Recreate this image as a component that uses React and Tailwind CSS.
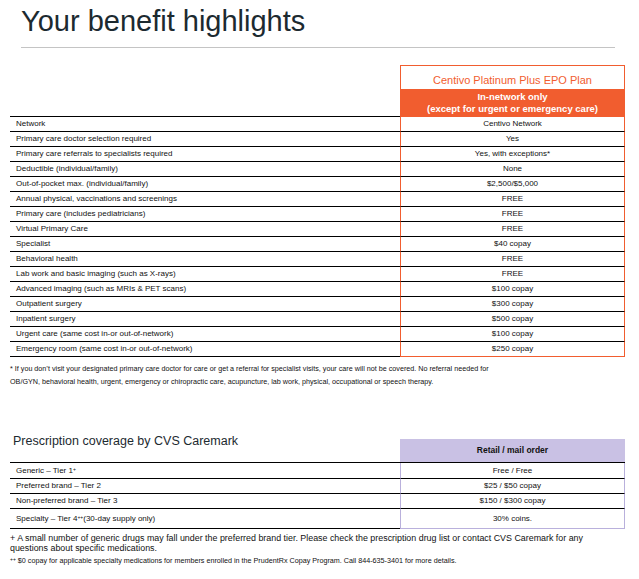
import React from 'react';

const benefits = [
  ['Network', 'Centivo Network'],
  ['Primary care doctor selection required', 'Yes'],
  ['Primary care referrals to specialists required', 'Yes, with exceptions*'],
  ['Deductible (individual/family)', 'None'],
  ['Out-of-pocket max. (individual/family)', '$2,500/$5,000'],
  ['Annual physical, vaccinations and screenings', 'FREE'],
  ['Primary care (includes pediatricians)', 'FREE'],
  ['Virtual Primary Care', 'FREE'],
  ['Specialist', '$40 copay'],
  ['Behavioral health', 'FREE'],
  ['Lab work and basic imaging (such as X-rays)', 'FREE'],
  ['Advanced imaging (such as MRIs & PET scans)', '$100 copay'],
  ['Outpatient surgery', '$300 copay'],
  ['Inpatient surgery', '$500 copay'],
  ['Urgent care (same cost in-or out-of-network)', '$100 copay'],
  ['Emergency room (same cost in-or out-of-network)', '$250 copay'],
];

const rx = [
  { label: 'Generic – Tier 1', sup: '+', rest: '', value: 'Free / Free', h: 'h-[16px]' },
  { label: 'Preferred brand – Tier 2', sup: '', rest: '', value: '$25 / $50 copay', h: 'h-[15px]' },
  { label: 'Non-preferred brand – Tier 3', sup: '', rest: '', value: '$150 / $300 copay', h: 'h-[15px]' },
  { label: 'Specialty – Tier 4', sup: '++', rest: ' (30-day supply only)', value: '30% coins.', h: 'h-[20px]' },
];

export default function App() {
  return (
    <div className="w-[639px] h-[579px] bg-white overflow-hidden text-[#111] font-['Liberation_Sans',Arial,sans-serif]">
      <h1 className="pt-[7px] pl-[21px] text-[29px] leading-none text-[#1c2a30]">Your benefit highlights</h1>
      <div className="mt-[11px] ml-[21px] w-[594px] h-px bg-[#c4c4c4]" />

      <div className="ml-[10px] w-[615px] mt-[17px]">
        <div className="flex">
          <div className="w-[390px] border-b border-black" />
          <div className="w-[225px] border border-b-0 border-[#f15d2f]">
            <div className="h-[23px] flex items-end justify-center pb-[3px] text-[11px] leading-none text-[#f15d2f]">
              Centivo Platinum Plus EPO Plan
            </div>
            <div className="h-[28px] bg-[#f15d2f] flex flex-col items-center justify-center text-white font-bold text-[9.5px] leading-[12px]">
              <span>In-network only</span>
              <span>(except for urgent or emergency care)</span>
            </div>
          </div>
        </div>

        {benefits.map(([label, value], i) => {
          const last = i === benefits.length - 1;
          return (
            <div key={label} className="flex h-[15px] text-[8px] leading-none">
              <div className="w-[390px] pl-[6px] border-b border-black flex items-center">{label}</div>
              <div className={`w-[225px] border-x border-[#f15d2f] border-b flex items-center justify-center ${last ? 'border-b-[#f15d2f]' : 'border-b-black'}`}>
                {value}
              </div>
            </div>
          );
        })}
      </div>

      <p className="ml-[10px] mt-[6px] w-[500px] text-[7.2px] leading-[12.5px]">
        * If you don’t visit your designated primary care doctor for care or get a referral for specialist visits, your care will not be covered. No referral needed for OB/GYN, behavioral health, urgent, emergency or chiropractic care, acupuncture, lab work, physical, occupational or speech therapy.
      </p>

      <div className="ml-[10px] w-[615px] mt-[47px]">
        <div className="flex items-start">
          <h2 className="w-[390px] pl-[3px] text-[12.5px] leading-none text-[#1c2a30]">Prescription coverage by CVS Caremark</h2>
          <div className="w-[225px] mt-[4px] h-[23px] bg-[#c9c1e4] flex items-center justify-center font-bold text-[8.5px]">
            Retail / mail order
          </div>
        </div>
        <div className="h-px bg-black" />
        {rx.map((r, i) => {
          const last = i === rx.length - 1;
          return (
            <div key={r.label} className={`flex ${r.h} text-[8px] leading-none`}>
              <div className="w-[390px] pl-[6px] border-b border-black flex items-center">
                {r.label}
                {r.sup && <sup className="text-[5px] -top-[2px]">{r.sup}</sup>}
                {r.rest}
              </div>
              <div className={`w-[225px] border-x border-[#b9b0dc] border-b flex items-center justify-center ${last ? 'border-b-[#b9b0dc]' : 'border-b-black'}`}>
                {r.value}
              </div>
            </div>
          );
        })}
      </div>

      <div className="ml-[10px] mt-[5px] w-[590px]">
        <p className="text-[8.9px] leading-[9.5px]">+ A small number of generic drugs may fall under the preferred brand tier. Please check the prescription drug list or contact CVS Caremark for any questions about specific medications.</p>
        <p className="mt-[3px] text-[7.2px] leading-[9px]">
          <sup className="text-[5px]">++</sup> $0 copay for applicable specialty medications for members enrolled in the PrudentRx Copay Program. Call 844-635-3401 for more details.
        </p>
      </div>
    </div>
  );
}
